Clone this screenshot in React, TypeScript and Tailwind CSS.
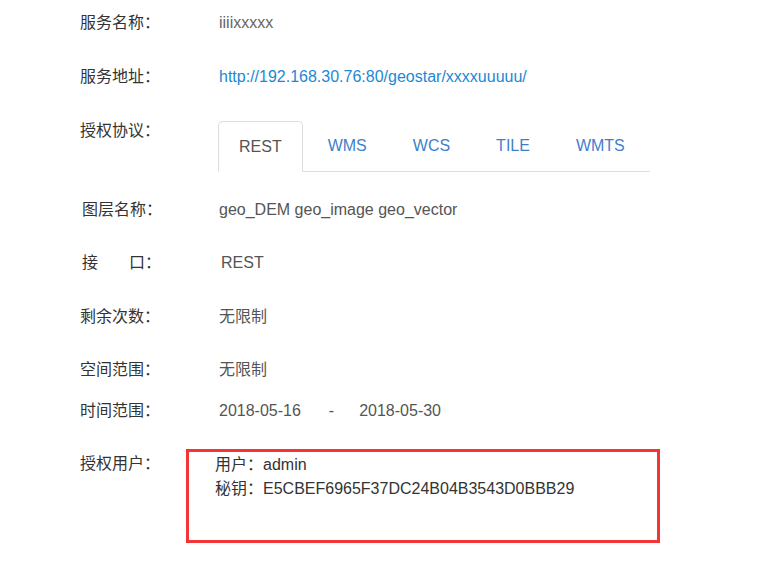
const font = { fontFamily: '"Liberation Sans", "Noto Sans CJK SC", Arial, sans-serif' };

function Row({ label, children, className = '' }: { label: React.ReactNode; children: React.ReactNode; className?: string }) {
  return (
    <div className={`flex h-6 items-center ${className}`}>
      <div className="w-[139px] shrink-0 text-[#333]">{label}</div>
      <div className="text-[#555]">{children}</div>
    </div>
  );
}

const tabs = ['REST', 'WMS', 'WCS', 'TILE', 'WMTS'];

export default function App() {
  return (
    <div className="h-[579px] w-[768px] bg-white pl-20 text-[16px] leading-6" style={font}>
      <div className="pt-[11px]">
        <Row label="服务名称：">
          <span className="text-[#666]">iiiixxxxx</span>
        </Row>
        <Row label="服务地址：" className="mt-[30px]">
          <a className="text-[#1e88d2]">http://192.168.30.76:80/geostar/xxxxuuuuu/</a>
        </Row>

        <div className="mt-[32px] flex items-start">
          <div className="w-[138px] shrink-0 leading-5 text-[#333]">授权协议：</div>
          <div className="flex w-[432px] border-b border-[#dddddd]">
            {tabs.map((t, i) => (
              <div
                key={t}
                className={
                  i === 0
                    ? '-mb-px mr-[4px] flex h-[51px] items-center rounded-t-[5px] border border-b-white border-[#dddddd] bg-white px-5 text-[#555]'
                    : 'mr-[4px] flex h-[50px] items-center border border-transparent px-5 text-[#3f7fcc]'
                }
              >
                {t}
              </div>
            ))}
          </div>
        </div>

        <Row label={<span className="pl-[2px]">图层名称：</span>} className="mt-[26px]">
          geo_DEM geo_image geo_vector
        </Row>
        <Row
          label={
            <span className="pl-[2px]">
              接<span className="inline-block w-[31px]" />口：
            </span>
          }
          className="mt-[29px]"
        >
          <span className="pl-[2px]">REST</span>
        </Row>
        <Row label="剩余次数：" className="mt-[30px]">
          无限制
        </Row>
        <Row label="空间范围：" className="mt-[29px]">
          无限制
        </Row>
        <Row label="时间范围：" className="mt-[17px]">
          <span>2018-05-16</span>
          <span className="pl-[28px] pr-[25px]">-</span>
          <span>2018-05-30</span>
        </Row>

        <div className="mt-[26px] flex items-start">
          <div className="w-[106px] shrink-0 pt-[3px] text-[#333]">授权用户：</div>
          <div className="h-[94px] w-[474px] border-[3px] border-[#f23535] pl-[26px] pt-px text-[#333]">
            <div>用户：admin</div>
            <div>秘钥：E5CBEF6965F37DC24B04B3543D0BBB29</div>
          </div>
        </div>
      </div>
    </div>
  );
}
